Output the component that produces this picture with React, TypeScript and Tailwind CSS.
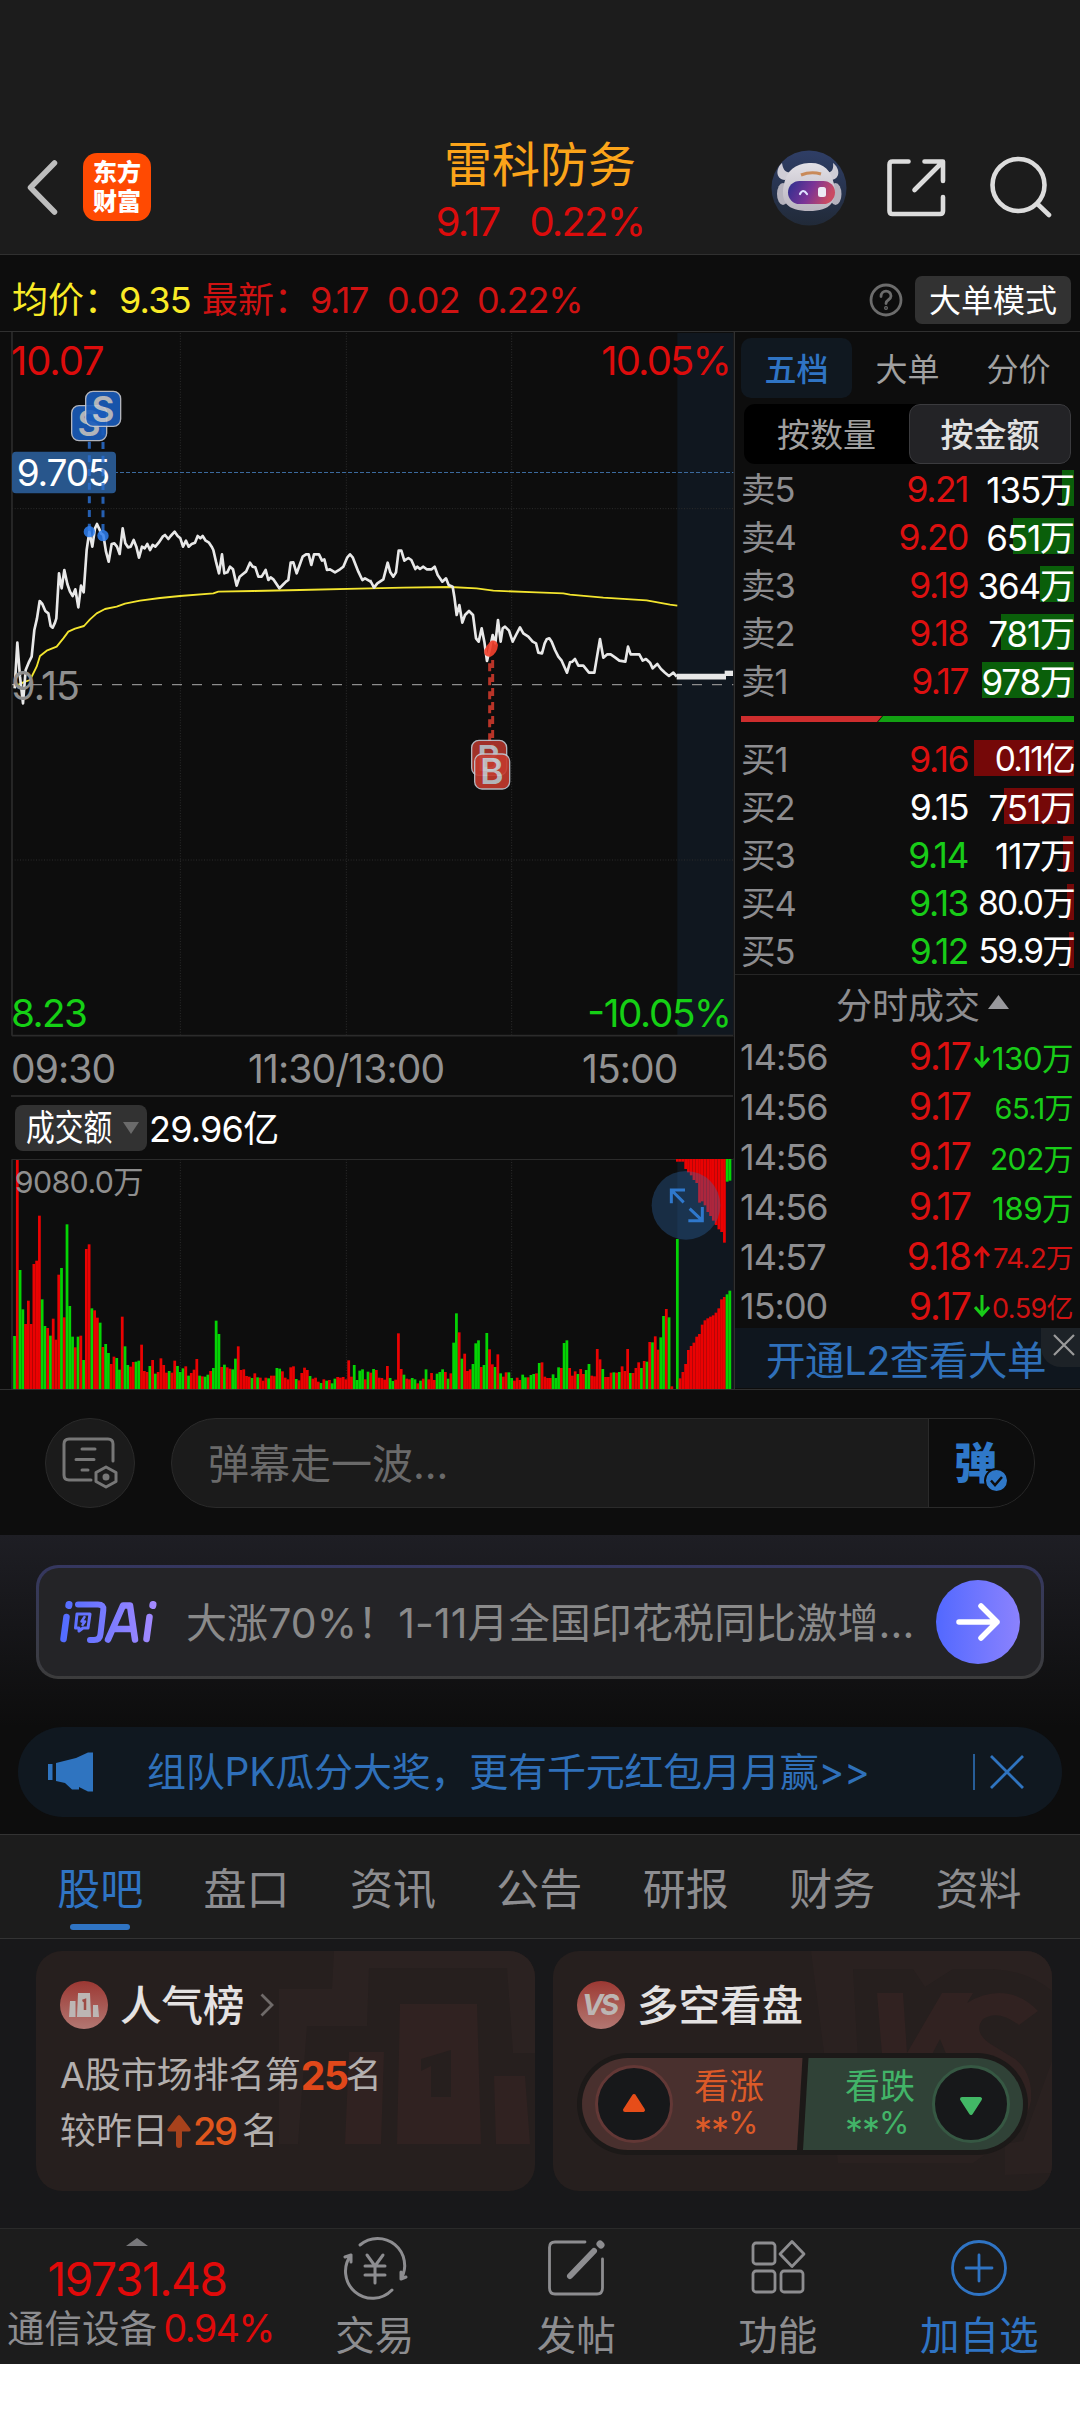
import React from "react";

/* One entry per minute: colour letter + top edge on the plot's grid. */
const VOLUME =
  "g948 r420 g750 g868 r912 r842 r912 r732 r722 r587 g838 g918 r924 g947 r896 r959 r764 g744 r892 g613 g858 g950 r982 g950 r947 g1020 r687 r673 g865 r871 r893 g908 r981 g972 g999 r1032 r1010 g1014 g1049 r890 g979 g1035 r1040 r1026 g1025 g1022 r974 r1053 r1056 g1038 r1020 g1061 r1056 r1015 r1035 r1058 g1053 r1058 r1022 g1038 g1056 g1045 r1039 g1067 r1059 r1049 r1017 g1067 r1069 g1070 g1064 r1053 g1044 g902 g942 r1041 g1034 r1042 r1046 g1048 g1016 r979 r1050 r1048 r1068 r1070 g1074 r1060 g1072 r1073 r1082 r1073 g1075 r1067 r1067 g1044 g1046 r1054 r1073 r1078 r1042 r1039 g1077 r1081 r1059 r1043 r1050 g1068 r1076 r1073 r1085 g1089 r1078 g1082 r1080 g1090 g1076 r1071 r1073 r1071 r1078 r1021 r1070 g1035 g1080 g1052 g1048 r1078 g1055 r1058 g1047 r1050 r1073 r1074 r1079 r1038 g1074 g1083 r1079 r940 r1047 g1064 r1076 r1078 g1074 g1078 r1090 g1082 r1076 g1048 r1078 r1059 r1080 g1061 g1056 g1048 r1056 g1076 r1060 g968 g880 r937 g1016 r1001 r1053 r1048 g1032 g970 g961 r1041 g1035 g939 r988 r1033 g1041 r1003 g1060 r1070 r1057 g1057 g1074 r1082 r1073 r1080 g1064 g1072 r1072 g1065 g1062 r1060 g1029 r1027 r1070 r1074 r1074 g1063 g1074 g1042 r1044 g969 g961 r1044 r1067 r1054 g1062 r1047 r1062 g1050 g1032 r1067 r1069 r987 r1018 g1047 r1071 r1071 r1058 g1057 r1058 g1056 r1039 r1053 r987 g1059 r1059 r1044 r1027 g1044 r1023 g1025 r966 g967 r949 r989 g952 g888 r867 g892 r1099 r1107 g657 r1075 r1056 r1032 r990 r978 r968 r950 r942 r914 r901 r895 r890 r886 r878 r865 r838 r831 g823 g812".split(" ");

const AUCTION =
  "r425 r425 r425 r447 r457 r466 r480 r489 r548 r544 r556 r576 r588 r602 r615 r628 r636 r668 g485 g482".split(" ");

const PRICE_AM =
  "44,1105 52,968 60,1070 69,1150 77,1050 86,1028 95,1010 103,930 111,895 119,843 127,852 136,873 145,880 152,918 158,923 165,908 169,895 177,760 185,805 193,750 202,792 210,815 218,828 226,808 235,862 243,797 251,817 260,690 268,635 277,680 285,625 291,612 297,625 303,640 310,645 318,695 326,725 335,672 343,670 351,680 359,702 368,625 376,670 384,682 392,680 401,660 409,680 417,713 426,680 434,685 442,672 450,690 458,675 466,680 476,668 488,650 495,645 505,657 512,648 524,635 533,648 541,655 549,680 558,662 566,680 575,672 585,668 593,648 601,655 608,648 617,662 627,668 635,680 640,690 648,725 657,760 666,703 673,760 682,757 690,740 699,748 710,797 719,770 729,762 738,755 750,728 758,740 766,742 775,770 785,770 797,750 805,780 812,772 820,778 838,805 848,795 858,785 865,780 872,728 880,727 890,760 900,732 908,710 918,703 926,703 934,735 942,703 957,703 966,722 973,718 981,750 990,748 1005,757 1020,748 1030,740 1042,712 1050,703 1058,712 1067,735 1075,755 1087,780 1095,775 1112,785";
const PRICE_PM =
  "0,780 12,803 22,790 40,778 53,728 61,757 70,770 78,757 86,692 94,692 103,722 115,714 124,720 136,747 142,740 150,747 160,740 170,748 185,748 194,740 203,765 217,785 228,775 236,795 248,800 253,830 260,885 268,855 277,908 285,885 297,873 309,885 318,955 326,965 335,925 343,965 351,1023 360,985 368,945 376,970 384,900 392,965 398,925 405,920 417,932 428,965 438,945 450,922 460,940 475,950 488,965 498,970 505,998 516,1000 524,970 530,958 538,955 545,965 555,990 565,1010 575,1022 583,1040 591,1058 600,1027 607,1025 615,1017 625,1037 640,1037 657,1058 673,1058 681,1010 690,957 700,1013 712,1003 722,1003 735,1012 748,1022 766,1025 774,980 782,1003 800,1003 808,1003 818,1022 828,1017 840,1028 848,1045 862,1032 873,1047 885,1058 897,1068 910,1058 920,1070";
const AVG_AM =
  "44,1100 70,1087 90,1080 110,1040 120,1008 140,992 170,980 190,955 205,935 225,926 252,918 270,898 290,880 315,867 350,860 375,851 420,842 480,834 540,828 640,820 655,815 760,813 900,810 1110,805";
const AVG_PM =
  "0,805 100,803 240,801 320,805 370,812 500,817 580,820 600,824 700,833 830,841 900,854 922,857";

type ChartTextProps = {
  x: number;
  y: number;
  w: number;
  size: number;
  fill: string;
  children: string;
};

function ChartText({ x, y, w, size, fill, children }: ChartTextProps) {
  return (
    <text x={x} y={y} fontSize={size} textLength={w} fill={fill}>
      {children}
    </text>
  );
}

function Marker({ x, y, letter, fill }: { x: number; y: number; letter: string; fill: string }) {
  return (
    <g opacity="0.9">
      <rect x={x} y={y} width="105" height="105" rx="22" fill={fill} stroke="#c4c7d0" strokeWidth="4" />
      <text x={x + 52} y={y + 91} textAnchor="middle" fontSize="106" fontWeight="600" fill="#c4c7cc">
        {letter}
      </text>
    </g>
  );
}

function Header() {
  return (
    <header className="flex h-[255px] items-start border-b border-[#303030] bg-[#1c1c1c]">
      <div className="mt-[153px] flex w-[420px] items-center">
        <svg className="ml-[26px] h-[60px] w-[34px]" viewBox="0 0 34 60" fill="none" stroke="#bdbdbd" strokeWidth="5.5" strokeLinecap="round" strokeLinejoin="round">
          <path d="M28.500 6L4.500 30.500L28.500 55" />
        </svg>
        <div className="ml-[23px] flex h-[68px] w-[68px] flex-col items-center justify-center rounded-[14px] bg-[#ff4a02] text-[24px] leading-[29px] font-black text-white">
          <span>东方</span>
          <span>财富</span>
        </div>
      </div>
      <div className="flex w-[240px] flex-col items-center pt-[136px]">
        <div className="h-[56px] text-[48px] leading-[57px] whitespace-nowrap text-[#fba41a]">雷科防务</div>
        <div className="flex h-[60px] items-center gap-[30px] text-[40px] tracking-[-1.8px] whitespace-nowrap text-[#dc0c0c]">
          <span>9.17</span>
          <span>0.22%</span>
        </div>
      </div>
      <div className="ml-[111px] flex pt-[150px]">
        <svg className="h-[76px] w-[76px]" viewBox="0 0 76 76">
          <defs>
            <linearGradient id="robotBg" x1="0" y1="0" x2="0" y2="1">
              <stop offset="0" stopColor="#2f3e66" />
              <stop offset="1" stopColor="#212a38" />
            </linearGradient>
            <linearGradient id="visor" x1="0" y1="0" x2="1" y2="0.25">
              <stop offset="0" stopColor="#2b2f8f" />
              <stop offset="0.55" stopColor="#7b3496" />
              <stop offset="1" stopColor="#c94a63" />
            </linearGradient>
            <linearGradient id="helmet" x1="0" y1="0" x2="0" y2="1">
              <stop offset="0" stopColor="#e2e0e6" />
              <stop offset="1" stopColor="#b9b4bf" />
            </linearGradient>
          </defs>
          <circle cx="38" cy="38" r="37.500" fill="url(#robotBg)" />
          <path d="M11 13C5 18 4 29 14 30L22 22C15 24 12 20 11 13ZM62 13C69 18 70 29 60 30L54 22C60 24 63 20 62 13Z" fill="#cfcdd6" />
          <ellipse cx="12" cy="44" rx="6" ry="11" fill="#b5b2bd" />
          <ellipse cx="64.500" cy="44" rx="6" ry="11" fill="#b5b2bd" />
          <path d="M38 13C52 12 60 20 63 34C66 52 60 61 38 61C16 61 9 52 13 34C16 20 24 14 38 13Z" fill="url(#helmet)" />
          <rect x="17" y="31" width="47" height="23" rx="11.500" fill="url(#visor)" />
          <path d="M30 25Q40 21 50 24" stroke="#c98a5a" strokeWidth="3" fill="none" />
          <path d="M29 44Q32 38 36 44" stroke="#dfe3ff" strokeWidth="2.200" fill="none" strokeLinecap="round" />
          <rect x="47" y="37" width="8" height="10" rx="2.500" fill="#eceaf5" />
        </svg>
        <svg className="ml-[37px] h-[76px] w-[66px]" viewBox="0 0 66 76" fill="none" stroke="#dcdcdc" strokeWidth="4.600" strokeLinecap="round" strokeLinejoin="round">
          <path d="M24.500 11.500H8.500Q5.500 11.500 5.500 14.500V61Q5.500 64 8.500 64H56Q59 64 59 61V47M40.500 11.500H59V31M58 12.500L30.500 40" />
        </svg>
        <svg className="ml-[36px] h-[76px] w-[66px]" viewBox="0 0 66 76" fill="none" stroke="#dcdcdc" strokeWidth="4.600" strokeLinecap="round">
          <circle cx="32.500" cy="35" r="26" />
          <path d="M51.500 54L63 65" />
        </svg>
      </div>
    </header>
  );
}

function Summary() {
  return (
    <div className="flex h-[77px] items-center border-b border-[#303030] pt-[14px] text-[36px] whitespace-nowrap text-[#cf1212]">
      <div className="ml-[12px] w-[190px] tracking-[-0.8px] text-[#f9ea27]">
        <span className="inline-block w-[107px] tracking-normal">均价：</span>
        <span>9.35</span>
      </div>
      <div className="w-[108px]">最新：</div>
      <div className="w-[77px] tracking-[-1.400px]">9.17</div>
      <div className="w-[90px] tracking-[-0.700px]">0.02</div>
      <div className="w-[381px] tracking-[-1.200px]">0.22%</div>
      <svg className="ml-[11px] h-[34px] w-[34px]" viewBox="0 0 34 34" fill="none" stroke="#6c6c6c" strokeWidth="2.800" strokeLinecap="round">
        <circle cx="17" cy="17" r="15" />
        <path d="M12 13.500C12 6.500 22 6.500 22 13C22 17 17 16.500 17 20.500" />
        <circle cx="17" cy="25" r="0.600" />
      </svg>
      <div className="ml-[12px] flex h-[48px] w-[156px] items-center justify-center rounded-[7px] bg-[#323232] pt-[2px] text-[32px] text-white">大单模式</div>
    </div>
  );
}

function PriceChart() {
  return (
    <svg className="block h-[705px] w-[735px]" viewBox="0 36 2205 2115">
      <rect x="2032" y="39" width="168" height="2106" fill="#10171f" />
      <g stroke="#2c2c2c" strokeWidth="3" strokeDasharray="3 5">
        <path d="M541 39V2145M1039 39V2145M1535 39V2145M36 566H2200M36 1620H2200" />
      </g>
      <path d="M36 36V2147M36 2147H2199" stroke="#2b2b2b" strokeWidth="5" />
      <path d="M2203 36V2151" stroke="#303030" strokeWidth="4" />
      <path d="M36 457.500H2200" stroke="#3b6a9e" strokeWidth="3" strokeDasharray="12 6" />
      <path d="M36 1094H2200" stroke="#8c8c8c" strokeWidth="4" strokeDasharray="30 30" />
      <rect x="36" y="395" width="312" height="125" rx="12" fill="#28568c" />
      <ChartText x={50} y={497} w={281} size={111} fill="#ffffff">9.705</ChartText>
      <g fill="none" stroke="#f3e52e" strokeWidth="5.500" strokeLinejoin="round">
        <polyline points={AVG_AM} />
        <polyline points={AVG_PM} transform="translate(1110 0)" />
      </g>
      <g fill="none" stroke="#e8e8e8" strokeWidth="8" strokeLinejoin="round">
        <polyline points={PRICE_AM} />
        <polyline points={PRICE_PM} transform="translate(1110 0)" />
        <path d="M2030 1070H2178" strokeWidth="17" />
        <path d="M2174 1060H2199" strokeWidth="16" />
      </g>
      <path d="M268 365V635M309 325V645" stroke="#2a6fcf" strokeOpacity="0.85" strokeWidth="9" strokeDasharray="21 20" />
      <g fill="#2f7ff0" opacity="0.85">
        <circle cx="268" cy="635" r="17" />
        <circle cx="309" cy="647" r="17" />
      </g>
      <Marker x={215} y={257} letter="S" fill="#1a5cbc" />
      <Marker x={257} y={214} letter="S" fill="#1a5cbc" />
      <path d="M1469 1030V1262M1478 1020V1290" stroke="#b83428" strokeWidth="9" strokeDasharray="24 18" />
      <path d="M1453 990Q1460 975 1473 962Q1490 958 1494 975Q1492 1000 1472 1010Q1450 1012 1453 990Z" fill="#f0402c" opacity="0.92" />
      <Marker x={1415} y={1261} letter="B" fill="#b2352b" />
      <Marker x={1424} y={1302} letter="B" fill="#c43a2e" />
      <ChartText x={33} y={165} w={281} size={120} fill="#dc0c0c">10.07</ChartText>
      <ChartText x={1804} y={165} w={391} size={120} fill="#dc0c0c">10.05%</ChartText>
      <ChartText x={34} y={1139} w={206} size={118} fill="#8f8f8f">9.15</ChartText>
      <ChartText x={33} y={2121} w={231} size={116} fill="#15d015">8.23</ChartText>
      <ChartText x={1762} y={2121} w={434} size={116} fill="#15d015">-10.05%</ChartText>
    </svg>
  );
}

function VolumeChart() {
  return (
    <svg className="block h-[231px] w-[735px]" viewBox="0 414 2205 693">
      <rect x="2032" y="418" width="168" height="690" fill="#10171f" />
      <path d="M541 418V1108M1039 418V1108M1535 418V1108" stroke="#2c2c2c" strokeWidth="3" strokeDasharray="3 5" />
      <path d="M36 418V1108" stroke="#2b2b2b" strokeWidth="5" />
      <path d="M36 418.500H2200" stroke="#2b2b2b" strokeWidth="3" />
      <path d="M2203 414V1108" stroke="#303030" strokeWidth="4" />
      {VOLUME.map((bar, i) => {
        const top = Number(bar.slice(1));
        return (
          <rect key={i} x={39.500 + i * 8.285} y={top} width="8.285" height={1107 - top} fill={bar[0] === "r" ? "#ea0202" : "#04d404"} />
        );
      })}
      {AUCTION.map((bar, i) => (
        <rect key={i} x={2028 + i * 8.3} y="417" width="8.300" height={Number(bar.slice(1)) - 417} fill={bar[0] === "r" ? "#ea0202" : "#04d404"} />
      ))}
      <ChartText x={44} y={518} w={387} size={91} fill="#8f8f8f">9080.0万</ChartText>
      <circle cx="2058" cy="556" r="103" fill="#3170b5" opacity="0.33" />
      <path d="M2014 550V510H2055M2014 510L2051 547M2107 561V602H2065M2107 602L2069 566" stroke="#2f78cc" strokeWidth="9" fill="none" />
    </svg>
  );
}

function ChartColumn() {
  return (
    <div className="flex w-[735px] shrink-0 flex-col">
      <PriceChart />
      <div className="flex h-[121px]">
        <div className="flex w-[734px] flex-col">
          <div className="ml-[11px] flex h-[60px] w-[722px] items-center border-b-2 border-[#272727] pt-[4px] text-[39px] leading-none whitespace-nowrap text-[#929292]">
            <span className="w-[237px] tracking-[-0.900px]">09:30</span>
            <span className="w-[334px] tracking-[-0.900px]">11:30/13:00</span>
            <span className="tracking-[-0.900px]">15:00</span>
          </div>
          <div className="flex h-[61px] items-center text-white">
            <div className="ml-[15px] flex h-[46px] w-[132px] items-center rounded-[8px] bg-[#323232]">
              <span className="ml-[11px] w-[97px] origin-left scale-x-[0.8] text-[36px] whitespace-nowrap">成交额</span>
              <svg className="h-[12px] w-[16px]" viewBox="0 0 16 12" fill="#6a6a6a">
                <path d="M0 0H16L8 12Z" />
              </svg>
            </div>
            <span className="ml-[2px] pt-[2px] text-[36px] tracking-[-0.800px] whitespace-nowrap">29.96亿</span>
          </div>
        </div>
        <div className="w-px bg-[#303030]" />
      </div>
      <VolumeChart />
    </div>
  );
}

type BookRow = [label: string, price: string, amount: string, tone: string, bar: string];

const SELLS: BookRow[] = [
  ["卖5", "9.21", "135万", "text-[#dc1010]", "w-[12px]"],
  ["卖4", "9.20", "651万", "text-[#dc1010]", "w-[61px]"],
  ["卖3", "9.19", "364万", "text-[#dc1010]", "w-[34px]"],
  ["卖2", "9.18", "781万", "text-[#dc1010]", "w-[73px]"],
  ["卖1", "9.17", "978万", "text-[#dc1010]", "w-[92px]"],
];
const BUYS: BookRow[] = [
  ["买1", "9.16", "0.11亿", "text-[#dc1010]", "w-[100px]"],
  ["买2", "9.15", "751万", "text-white", "w-[70px]"],
  ["买3", "9.14", "117万", "text-[#18cc18]", "w-[11px]"],
  ["买4", "9.13", "80.0万", "text-[#18cc18]", "w-[7px]"],
  ["买5", "9.12", "59.9万", "text-[#18cc18]", "w-[5px]"],
];

function Book({ rows, barTone }: { rows: BookRow[]; barTone: string }) {
  return (
    <div className="flex flex-col leading-none whitespace-nowrap">
      {rows.map(([label, price, amount, tone, bar]) => (
        <div key={label} className="relative flex h-[48px] items-center pt-[4px]">
          <div className={`absolute top-[6px] right-[6px] h-[36px] ${barTone} ${bar}`} />
          <span className="relative ml-[6px] w-[90px] text-[34.500px] tracking-[-1px] text-[#8d8d90]">{label}</span>
          <span className={`relative w-[137px] text-right text-[35.500px] tracking-[-1.500px] ${tone}`}>{price}</span>
          <span className={amount.length > 4 ? "relative ml-auto pr-[6px] text-[33.500px] tracking-[-1.700px] text-white" : "relative ml-auto pr-[6px] text-[35px] tracking-[-1.100px] text-white"}>{amount}</span>
        </div>
      ))}
    </div>
  );
}

type Tick = [time: string, price: string, arrow: "up" | "down" | "", amount: string, tone: string];

const TICKS: Tick[] = [
  ["14:56", "9.17", "down", "130万", "text-[31.500px] text-[#18cc18]"],
  ["14:56", "9.17", "", "65.1万", "text-[29px] text-[#18cc18]"],
  ["14:56", "9.17", "", "202万", "text-[30px] text-[#18cc18]"],
  ["14:56", "9.17", "", "189万", "text-[31.500px] text-[#18cc18]"],
  ["14:57", "9.18", "up", "74.2万", "text-[27.500px] text-[#cf1212]"],
  ["15:00", "9.17", "down", "0.59亿", "text-[27px] text-[#cf1212]"],
];

function Ticks() {
  return (
    <div className="flex flex-col whitespace-nowrap">
      {TICKS.map(([time, price, arrow, amount, tone], i) => (
        <div key={i} className="flex h-[49.900px] items-center leading-none">
          <span className="ml-[5px] w-[110px] text-[36px] tracking-[-1px] text-[#8d8d90]">{time}</span>
          <span className="w-[121px] text-right text-[37.500px] tracking-[-1px] text-[#dc1010]">{price}</span>
          <svg className="ml-[3px] h-[24px] w-[16px] shrink-0" viewBox="0 0 16 24" fill="none" strokeWidth="3">
            {arrow === "down" && <path d="M8 1V21M1 13L8 21L15 13" stroke="#18cc18" />}
            {arrow === "up" && <path d="M8 23V3M1 11L8 3L15 11" stroke="#dc1010" />}
          </svg>
          <span className={`ml-auto pt-[4px] pr-[7px] tracking-[-0.600px] ${tone}`}>{amount}</span>
        </div>
      ))}
    </div>
  );
}

function BookColumn() {
  return (
    <div className="flex w-[345px] flex-col">
      <div className="mt-[6px] ml-[6px] flex h-[60px] items-center text-[32px] text-[#a0a0a0]">
        <div className="flex h-[60px] w-[111px] items-center justify-center rounded-[10px] bg-[#101820] pt-[3px] font-medium text-[#2f74c4]">五档</div>
        <div className="w-[111px] pt-[3px] text-center">大单</div>
        <div className="w-[111px] pt-[3px] text-center">分价</div>
      </div>
      <div className="mt-[6px] ml-[9px] flex h-[60px] w-[327px] rounded-[11px] bg-black text-[33px] leading-none text-[#a0a0a0]">
        <div className="flex w-[165px] items-center justify-center pt-[3px]">按数量</div>
        <div className="flex w-[162px] items-center justify-center rounded-[11px] border border-[#3b3b3e] bg-[#232326] pt-[2px] font-medium text-[#e2e2e2]">按金额</div>
      </div>
      <Book rows={SELLS} barTone="bg-[#0a5f0a]" />
      <svg className="mt-[12px] ml-[6px] h-[6px] w-[333px] shrink-0" viewBox="0 0 333 6">
        <path d="M0 0H141L136 6H0Z" fill="#cd2d2d" />
        <path d="M142 0H333V6H137Z" fill="#12a012" />
      </svg>
      <div className="mt-[12px]">
        <Book rows={BUYS} barTone="bg-[#750808]" />
      </div>
      <div className="flex h-[58px] items-center border-t border-[#262626] pt-[4px] text-[36px] text-[#8d8d90]">
        <span className="ml-[101px]">分时成交</span>
        <svg className="mb-[8px] ml-[8px] h-[14px] w-[21px]" viewBox="0 0 21 14" fill="#98989c">
          <path d="M10.500 0L21 14H0Z" />
        </svg>
      </div>
      <Ticks />
      <div className="-mt-[3px] flex h-[60px] items-start bg-[#0f161e]">
        <div className="ml-[31px] h-[59px] w-[275px] text-[39.500px] leading-[66px] tracking-[-0.400px] whitespace-nowrap text-[#2f70ba]">开通L2查看大单</div>
        <div className="flex h-[39px] w-[39px] items-start justify-center rounded-bl-[20px] bg-[#1d2227] pt-[6px]">
          <svg className="ml-[6px] h-[22px] w-[22px]" viewBox="0 0 22 22" stroke="#9a9a9a" strokeWidth="2.200">
            <path d="M1 1L21 21M21 1L1 21" />
          </svg>
        </div>
      </div>
    </div>
  );
}

function Danmu() {
  return (
    <div className="flex h-[146px] shrink-0 items-start border-t border-[#303030] pt-[28px]">
      <div className="ml-[45px] flex h-[90px] w-[90px] items-center justify-center rounded-full border border-[#2a2a2a] bg-[#1b1b1b]">
        <svg className="h-[56px] w-[58px]" viewBox="0 0 58 56" fill="none" stroke="#777777" strokeWidth="3" strokeLinecap="round">
          <path d="M52 26V9Q52 4 47 4H8Q3 4 3 9V40Q3 45 8 45H30" />
          <path d="M21 14H34M15 24.500H33M21 35H27" />
          <path d="M45 32L55 37.500V46.500L45 52L35 46.500V37.500Z" strokeLinejoin="round" />
          <circle cx="45" cy="42" r="2" fill="#777777" />
        </svg>
      </div>
      <div className="ml-[36px] flex h-[90px] w-[864px] items-center overflow-hidden rounded-full border border-[#2a2a2a] bg-[#1b1b1b]">
        <span className="ml-[36px] w-[720px] pt-[4px] text-[41px] text-[#6a6a6a]">弹幕走一波...</span>
        <div className="flex h-[90px] grow items-center border-l border-[#2a2a2a] bg-[#0d0d0d]">
          <div className="relative ml-[25px] text-[43px] font-black text-[#2f78c8]">
            弹
            <svg className="absolute right-[-12px] bottom-[2px] h-[25px] w-[25px]" viewBox="0 0 25 25">
              <circle cx="12.500" cy="12.500" r="11.500" fill="#2f78c8" stroke="#0d0d0d" strokeWidth="2" />
              <path d="M7 12.500L11 17L18 9" fill="none" stroke="#0d0d0d" strokeWidth="2.500" />
            </svg>
          </div>
        </div>
      </div>
    </div>
  );
}

function AskAi() {
  return (
    <div className="h-[192px] shrink-0 bg-gradient-to-b from-[#1e1e24] to-[#0d0d0d] pt-[30px]">
      <div className="mx-[36px] h-[114px] rounded-[22px] bg-gradient-to-b from-[#353760] to-[#3c3c3c] p-[3px]">
        <div className="flex h-[108px] items-center rounded-[20px] bg-[#242427]">
          <svg className="ml-[20px] h-[44px] w-[100px]" viewBox="0 0 100 44">
            <defs>
              <linearGradient id="askAi" x1="0" y1="0" x2="100" y2="0" gradientUnits="userSpaceOnUse">
                <stop offset="0" stopColor="#4f6bff" />
                <stop offset="1" stopColor="#a78bff" />
              </linearGradient>
            </defs>
            <g fill="none" stroke="url(#askAi)" strokeLinecap="round" strokeLinejoin="round">
              <path d="M7.500 17L4.500 39" strokeWidth="6.500" />
              <path d="M10 4.500L9.800 5.500" strokeWidth="7" />
              <path d="M19 4.500H39Q45 4.500 44.300 10L41.500 34Q41 40 35 40H31" strokeWidth="6" />
              <path d="M18 14H31L29 28H24L20 31V28H16.500Z" strokeWidth="3" />
              <path d="M25.500 17L22.500 21.500H26L23.500 25" strokeWidth="2.500" />
              <path d="M49 39.500L64 5.500H71L76 39.500M57 29H72" strokeWidth="6.500" />
              <path d="M90.500 17L87.500 39" strokeWidth="6.500" />
              <path d="M94 4.500L93.800 5.500" strokeWidth="7" />
            </g>
          </svg>
          <span className="ml-[27px] w-[740px] pt-[4px] text-[41px] tracking-[0.100px] whitespace-nowrap text-[#8a8a8a]">大涨70%！1-11月全国印花税同比激增...</span>
          <div className="ml-[10px] flex h-[84px] w-[84px] shrink-0 items-center justify-center rounded-full bg-gradient-to-r from-[#5268ff] to-[#8b82fd]">
            <svg className="h-[40px] w-[44px]" viewBox="0 0 44 40" fill="none" stroke="#ffffff" strokeWidth="5.500" strokeLinecap="round" strokeLinejoin="round">
              <path d="M3 20H41M25 4L41 20L25 36" />
            </svg>
          </div>
        </div>
      </div>
    </div>
  );
}

function Promo() {
  return (
    <div className="h-[107px] shrink-0">
      <div className="mx-[18px] flex h-[90px] items-center rounded-full bg-[#101820] text-[#2f70ba]">
        <svg className="ml-[30px] h-[40px] w-[46px]" viewBox="0 0 46 40" fill="#2f74c0">
          <path d="M0 12H4.500V28H0ZM8 11L28 6L40 0.500H45V39.500H40L31 35V37.500H24L17 31L8 29Z" />
        </svg>
        <span className="ml-[53px] w-[826px] pt-[1px] text-[39px] tracking-[-0.200px] whitespace-nowrap">组队PK瓜分大奖，更有千元红包月月赢&gt;&gt;</span>
        <div className="h-[36px] w-[2px] bg-[#275d98]" />
        <svg className="ml-[15px] h-[34px] w-[34px]" viewBox="0 0 34 34" stroke="#2f74c0" strokeWidth="2.800">
          <path d="M1 1L33 33M33 1L1 33" />
        </svg>
      </div>
    </div>
  );
}

const TABS = ["股吧", "盘口", "资讯", "公告", "研报", "财务", "资料"];

function Tabs() {
  return (
    <div className="flex h-[105px] shrink-0 border-y border-[#333333] bg-[#1c1c1c] pl-[27px] text-[43px] text-[#8d8d90]">
      {TABS.map((tab, i) => (
        <div key={tab} className="flex w-[146.400px] flex-col items-center">
          <div className={i === 0 ? "h-[89px] leading-[109px] text-[#2f74c4]" : "h-[89px] leading-[109px]"}>{tab}</div>
          {i === 0 && <div className="h-[6px] w-[60px] rounded-full bg-[#2f74c4]" />}
        </div>
      ))}
    </div>
  );
}

function Vote({ label }: { label: string }) {
  return (
    <>
      <div>{label}</div>
      <div className="flex h-[34px] items-center text-[31px] leading-[34px]">
        <span className="w-[34px] pt-[13px] text-[36px] tracking-[-1px]">**</span>
        <span className="tracking-[-0.500px]">%</span>
      </div>
    </>
  );
}

function Cards() {
  return (
    <div className="flex h-[289px] shrink-0 gap-[18px] bg-[#18181a] pt-[12px] pl-[36px]">
      <div className="relative h-[240px] w-[499px] overflow-hidden rounded-[26px] bg-[#261f1e]">
        <svg className="absolute inset-0 h-[240px] w-[499px]" viewBox="0 0 499 240">
          <path d="M298 0H499V102H477L471 17H333L331 75H271L262 193H243L243 38H296Z" fill="#2b2221" />
          <path d="M364 53H441L445 193H361ZM313 101H348L345 193H309ZM458 125H489L494 193H460Z" fill="#302221" />
          <path d="M385 108L415 99V146H395V115L385 120Z" fill="#261f1e" />
        </svg>
        <div className="relative flex h-[108px] items-center pl-[24px]">
          <svg className="h-[48px] w-[48px]" viewBox="0 0 48 48">
            <defs>
              <linearGradient id="badge" x1="0" y1="0" x2="0" y2="1">
                <stop offset="0" stopColor="#9c3833" />
                <stop offset="1" stopColor="#b27772" />
              </linearGradient>
            </defs>
            <circle cx="24" cy="24" r="24" fill="url(#badge)" />
            <path d="M10 20H15.500V36H9ZM18 12H30L31 36H17ZM33 24H38L39 36H33Z" fill="#bcb6b4" />
            <path d="M22.500 20L25 19V29" stroke="#9e4a45" strokeWidth="2.500" fill="none" />
          </svg>
          <span className="ml-[12px] pt-[2px] text-[41.500px] font-medium text-[#e4e2e2]">人气榜</span>
          <svg className="ml-[15px] h-[24px] w-[14px]" viewBox="0 0 14 24" fill="none" stroke="#6f6a69" strokeWidth="2.800">
            <path d="M1.500 1.500L12 12L1.500 22.500" />
          </svg>
        </div>
        <div className="relative flex h-[32px] items-center pl-[24px] text-[36px] leading-none whitespace-nowrap text-[#b3afae]">
          <span>A股市场排名第</span>
          <span className="w-[45px] text-[39px] font-bold tracking-[-1.500px] text-[#e0481a]">25</span>
          <span>名</span>
        </div>
        <div className="relative mt-[24px] flex h-[32px] items-center pl-[24px] text-[36px] leading-none whitespace-nowrap text-[#b3afae]">
          <span>较昨日</span>
          <svg className="ml-[-1px] h-[34px] w-[24px]" viewBox="0 0 24 34" fill="#a8421c">
            <path d="M12 1Q13 1 14 2.500L23.500 15Q24 17.500 22 17.500H15V31Q15 34 12 34Q9 34 9 31V17.500H2Q0 17.500 0.500 15L10 2.500Q11 1 12 1Z" />
          </svg>
          <span className="ml-[2px] w-[49px] text-[38px] font-medium tracking-[-2.500px] text-[#e0561c]">29</span>
          <span>名</span>
        </div>
      </div>
      <div className="relative h-[240px] w-[499px] overflow-hidden rounded-[26px] bg-[#261f1e]">
        <svg className="absolute inset-0 h-[240px] w-[499px]" viewBox="0 0 499 240">
          <path d="M258 0H499V75L484 85L499 100V222L452 224V190L420 212L285 212Z" fill="#2a2120" />
          <path d="M300 18H360L372 36L400 18H440Q475 20 499 40V110L470 190L400 200H310Z" fill="#261f1e" />
          <path d="M324 42H350L354 102L389 42H420L414 52Q430 42 446 42Q468 42 485 60L466 74Q445 58 430 68Q420 80 436 92L462 108Q480 122 478 150Q474 172 452 180L400 178L396 110L387 88L360 140H332Z" fill="#312221" />
        </svg>
        <div className="relative flex h-[102px] items-center pt-[6px] pl-[24px]">
          <div className="flex h-[48px] w-[48px] items-center justify-center rounded-full bg-gradient-to-b from-[#9c3833] to-[#b27772] text-[29px] font-bold tracking-[-3px] text-[#bcb6b4] italic">
            <span className="-ml-[4px]">VS</span>
          </div>
          <span className="ml-[12px] pt-[2px] text-[41.500px] font-medium text-[#e4e2e2]">多空看盘</span>
        </div>
        <div className="relative ml-[24px] flex h-[102px] w-[451px] rounded-full bg-[#1c1918] p-[5px]">
          <svg className="absolute inset-0 h-[102px] w-[451px]" viewBox="0 0 451 102">
            <path d="M51 5H225.500L220 97H51A46 46 0 0 1 51 5Z" fill="#49302e" />
            <path d="M231.500 5H400A46 46 0 0 1 400 97H226Z" fill="#304237" />
            <circle cx="57" cy="51" r="37.500" fill="#17181a" stroke="#633836" strokeWidth="3" />
            <circle cx="394" cy="51" r="37.500" fill="#17181a" stroke="#365843" strokeWidth="3" />
            <path d="M57 43L66 57H48Z" fill="#e64d19" stroke="#e64d19" strokeWidth="4" strokeLinejoin="round" />
            <path d="M394 60L403 46H385Z" fill="#42b866" stroke="#42b866" strokeWidth="4" strokeLinejoin="round" />
          </svg>
          <div className="relative ml-[112px] w-[151px] pt-[8px] text-[35px] leading-[40px] text-[#dc5a28]">
            <Vote label="看涨" />
          </div>
          <div className="relative pt-[8px] text-[35px] leading-[40px] text-[#42b468]">
            <Vote label="看跌" />
          </div>
        </div>
      </div>
    </div>
  );
}

function NavItem({ label, tone, children }: { label: string; tone: string; children: React.ReactNode }) {
  return (
    <div className={`flex w-[201.500px] flex-col items-center ${tone}`}>
      <svg className="mt-[7px] h-[64px] w-[70px]" viewBox="0 0 70 64" fill="none" stroke="currentColor" strokeWidth="2.800" strokeLinecap="round" strokeLinejoin="round">
        {children}
      </svg>
      <span className="mt-[16px] text-[39.500px] leading-[40px]">{label}</span>
    </div>
  );
}

function BottomNav() {
  return (
    <nav className="flex h-[136px] shrink-0 border-t border-[#2a2a2a] bg-[#1c1c1c]">
      <div className="flex w-[274px] flex-col items-center whitespace-nowrap">
        <svg className="mt-[9px] h-[8px] w-[22px]" viewBox="0 0 22 8" fill="#77777a">
          <path d="M11 0L22 8H0Z" />
        </svg>
        <div className="mt-[10px] h-[46px] text-[46px] leading-[46px] tracking-[-1.400px] text-[#e00a0a]">19731.48</div>
        <div className="mt-[7px] flex h-[40px] w-[274px] items-center pl-[7px] text-[37.500px] leading-none text-[#8d8d90]">
          <span className="w-[160px]">通信设备</span>
          <span className="text-[37.500px] tracking-[-1.400px] text-[#e00a0a]">0.94%</span>
        </div>
      </div>
      <NavItem label="交易" tone="text-[#8d8d90]">
        <path d="M20 9A27 27 0 0 1 61 43M61 43L66 41M61 43V36" strokeWidth="3" />
        <path d="M52 54A27 27 0 0 1 11 19M11 19L5 21M11 19V26" strokeWidth="3" />
        <path d="M27 19L35 30L43 19M25 30H45M25 39H45M35 30V47" strokeWidth="3" />
      </NavItem>
      <NavItem label="发帖" tone="text-[#8d8d90]">
        <path d="M44 6H14Q8.500 6 8.500 11.500V52Q8.500 58 14 58H56Q61.500 58 61.500 52V23" />
        <path d="M59 8L60 9" strokeWidth="7" />
        <path d="M53 15L29 40" strokeWidth="6" />
      </NavItem>
      <NavItem label="功能" tone="text-[#8d8d90]">
        <rect x="10" y="7" width="22" height="21" rx="3" />
        <rect x="10" y="35" width="22" height="21" rx="3" />
        <rect x="38" y="35" width="22" height="21" rx="3" />
        <path d="M49 5.500L61 18L49 30.500L37 18Z" />
      </NavItem>
      <NavItem label="加自选" tone="text-[#2f74c4]">
        <circle cx="35" cy="32" r="26.500" />
        <path d="M22 32H48M35 19V45" />
      </NavItem>
    </nav>
  );
}

export default function App() {
  return (
    <div className="h-[2412px] w-[1080px] overflow-hidden bg-white font-['Inter','Noto_Sans_CJK_SC',sans-serif]">
      <div className="flex h-[2364px] flex-col bg-[#0d0d0d]">
        <Header />
        <Summary />
        <div className="flex h-[1057px] shrink-0">
          <ChartColumn />
          <BookColumn />
        </div>
        <Danmu />
        <AskAi />
        <Promo />
        <Tabs />
        <Cards />
        <BottomNav />
      </div>
    </div>
  );
}
